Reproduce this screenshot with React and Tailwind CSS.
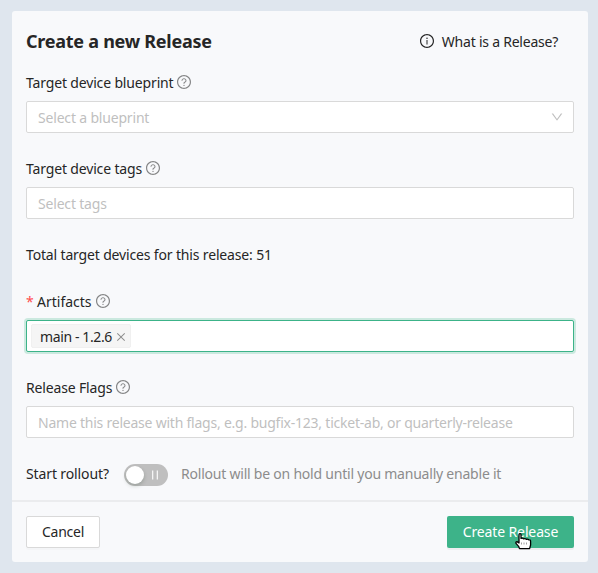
import {
  AiOutlineClose,
  AiOutlineDown,
  AiOutlineInfoCircle,
  AiOutlinePause,
  AiOutlineQuestionCircle,
} from "react-icons/ai";

function Label({ children, className = "tracking-[-0.155px]", required = false }) {
  return (
    <div className="mb-2 flex h-5 items-center">
      {required && <span className="mr-1 w-[7px] text-[#ff4d4f]">*</span>}
      <span className={className}>{children}</span>
      <AiOutlineQuestionCircle className="mb-[2px] ml-[3px] size-4 shrink-0 text-[#858687]" />
    </div>
  );
}

function Field({ children }) {
  return (
    <div className="flex h-8 items-center justify-between rounded-[2px] border border-[#d9d9d9] bg-white px-[11px] text-[#bfbfbf]">
      {children}
    </div>
  );
}

function HandCursor() {
  return (
    <svg className="absolute left-[68px] top-[17px] h-[17px] w-[17px]" viewBox="0 0 17 17">
      <path
        d="M4 1.6Q4 .7 5 .7T6 1.6V5.4Q7.8 4.8 8.6 5.8Q10.3 5.2 11.4 6.3Q12.8 5.8 13.8 6.8Q15.6 6.6 15.6 8.4V12L14.6 15.6H4.5L3.8 13.7 1 10.4Q.5 8.7 2 8.6L4 10Z"
        fill="#fff"
        stroke="#000"
        strokeWidth="1.3"
        strokeLinejoin="round"
      />
      <path d="M6.5 9.5v2M9 9.5v2M11.5 9.5v2" stroke="#888" strokeWidth=".8" />
    </svg>
  );
}

export default function App() {
  return (
    <div className="h-[573px] w-[598px] overflow-hidden bg-[#dfe6ee] pl-3 pt-[11px] font-['Noto_Sans',sans-serif] text-[14px] leading-5 whitespace-nowrap text-[#262626]">
      <div className="h-[551px] w-[576px] overflow-hidden rounded-[3px] bg-[#f8f9fb]">
        <main className="px-[14px]">
          <header className="flex h-[62px] items-center justify-between pr-4">
            <h1 className="pb-[2px] text-[18px] font-bold tracking-[-0.26px]">Create a new Release</h1>
            <div className="flex items-center gap-[7px]">
              <AiOutlineInfoCircle className="mb-[2px] size-4" />
              <span className="tracking-[-0.23px]">What is a Release?</span>
            </div>
          </header>

          <Label>Target device blueprint</Label>
          <Field>
            <span className="pt-[2px] tracking-[-0.18px]">Select a blueprint</span>
            <AiOutlineDown className="-mr-0.5 size-[14px]" />
          </Field>

          <section className="mt-[26px]">
            <Label>Target device tags</Label>
            <Field>
              <span className="pt-[2px] tracking-[-0.18px]">Select tags</span>
            </Field>
          </section>

          <p className="mt-[26px] h-5">
            <span className="tracking-[-0.155px]">Total target devices for this release: 51</span>
          </p>

          <section className="mt-[27px]">
            <Label required className="tracking-normal">Artifacts</Label>
            <div className="flex h-8 items-center rounded-[2px] border border-[#3cb389] bg-white px-1 shadow-[0_0_0_2px_#cbe9df]">
              <div className="flex h-6 w-[100px] items-center rounded-[2px] border border-[#f0f0f0] bg-[#f5f5f5] pl-2">
                <span className="pt-[2px] tracking-[-0.38px]">main - 1.2.6</span>
                <AiOutlineClose className="ml-[3px] mt-px size-3 text-[#8c8c8c]" />
              </div>
            </div>
          </section>

          <section className="mt-[26px]">
            <Label>Release Flags</Label>
            <Field>
              <span className="pt-[2px] tracking-[-0.228px]">
                Name this release with flags, e.g. bugfix-123, ticket-ab, or quarterly-release
              </span>
            </Field>
          </section>

          <div className="mt-[26px] flex h-[22px] items-center">
            <div className="w-[98px] pb-[2px]">
              <span className="tracking-[-0.12px]">Start rollout?</span>
            </div>
            <div className="flex h-[22px] w-11 items-center rounded-full bg-[#bfbfbf] pl-[2px]">
              <div className="size-[18px] rounded-full bg-white shadow-[0_2px_4px_rgba(0,35,11,0.2)]" />
              <AiOutlinePause className="ml-1 size-[14px] text-white" />
            </div>
            <span className="ml-[13px] pb-[2px] tracking-[-0.22px] text-[#8c8c8c]">
              Rollout will be on hold until you manually enable it
            </span>
          </div>
        </main>

        <footer className="mt-[14px] flex justify-between border-t-2 border-[#ebecee] p-[14px]">
          <button className="flex h-8 w-[74px] items-center justify-center rounded-[2px] border border-[#d9d9d9] bg-white shadow-[0_2px_0_rgba(0,0,0,0.016)]">
            <span className="tracking-[-0.25px]">Cancel</span>
          </button>
          <button className="relative flex h-8 w-[127px] items-center justify-center rounded-[2px] bg-[#3db389] text-white shadow-[0_2px_0_rgba(0,0,0,0.045)]">
            <span className="tracking-[-0.13px]">Create Release</span>
            <HandCursor />
          </button>
        </footer>
      </div>
    </div>
  );
}
